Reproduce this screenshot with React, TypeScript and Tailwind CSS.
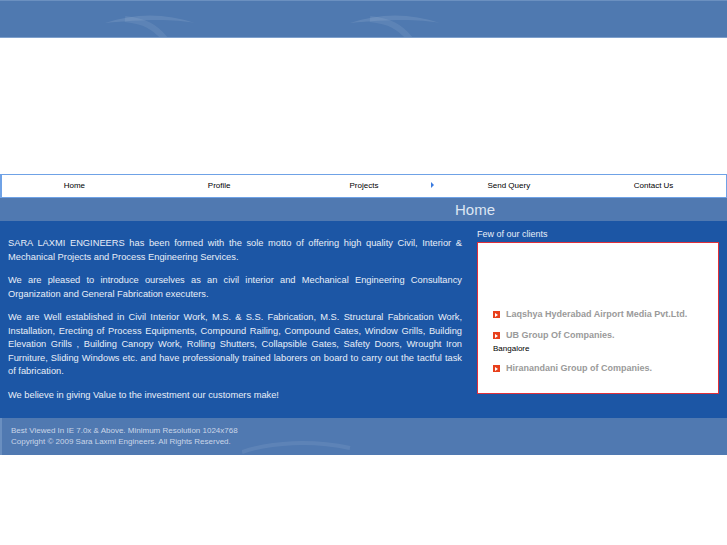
import { ReactNode } from "react";

const font = { fontFamily: '"Liberation Sans", Arial, sans-serif' };

const navItems = ["Home", "Profile", "Projects", "Send Query", "Contact Us"];

function Swoosh({ className }: { className?: string }) {
  return (
    <svg className={className} width="160" height="38" viewBox="0 0 160 38" fill="none">
      <path d="M10 22 C40 12, 70 12, 100 22 C80 18, 50 18, 10 22 Z" fill="#ffffff" fillOpacity="0.1" />
      <path d="M70 38 C60 26, 50 20, 30 18" stroke="#ffffff" strokeOpacity="0.08" strokeWidth="6" />
    </svg>
  );
}

function Client({ children }: { children: ReactNode }) {
  return (
    <div className="flex items-center gap-[6px] leading-[11px]">
      <span className="w-[7px] h-[7px] bg-[#e8401c] flex items-center justify-center">
        <span className="w-0 h-0 border-y-[2px] border-y-transparent border-l-[3px] border-l-white" />
      </span>
      <span className="text-[9px] font-bold text-[#9a9a9a]">{children}</span>
    </div>
  );
}

export default function App() {
  return (
    <div className="w-[727px] h-[545px] bg-white overflow-hidden" style={font}>
      <div className="relative h-[38px] bg-[#4f79b0] border-t border-[#6b90c0] border-b border-b-[#7ea0cc] overflow-hidden">
        <Swoosh className="absolute left-[95px] top-0" />
        <Swoosh className="absolute left-[340px] top-0" />
      </div>
      <div className="h-[136px]" />
      <div className="h-[24px] bg-white border border-[#6fa2e6] border-l-2 flex items-center text-[8px] text-black">
        {navItems.map((item, i) => (
          <div key={item} className="relative w-[145px] text-center">
            {item}
            {i === 2 && (
              <span className="absolute right-[2px] top-[2px] w-0 h-0 border-y-[3px] border-y-transparent border-l-[3px] border-l-[#3a7be0]" />
            )}
          </div>
        ))}
      </div>
      <div className="h-[23px] bg-[#5079b1] flex items-center">
        <div className="w-[455px]" />
        <div className="text-[15px] text-[#dde6f3] leading-none">Home</div>
      </div>
      <div className="h-[197px] bg-[#1c56a5] flex">
        <div className="w-[470px] pl-[8px] pr-[8px] pt-[16px] text-[9.3px] leading-[13.5px] text-[#e8eef8] text-justify">
          <p className="mb-[10px]">
            SARA LAXMI ENGINEERS has been formed with the sole motto of offering high quality Civil, Interior &amp; Mechanical Projects and Process Engineering Services.
          </p>
          <p className="mb-[10px]">
            We are pleased to introduce ourselves as an civil interior and Mechanical Engineering Consultancy Organization and General Fabrication executers.
          </p>
          <p className="mb-[10px]">
            We are Well established in Civil Interior Work, M.S. &amp; S.S. Fabrication, M.S. Structural Fabrication Work, Installation, Erecting of Process Equipments, Compound Railing, Compound Gates, Window Grills, Building Elevation Grills , Building Canopy Work, Rolling Shutters, Collapsible Gates, Safety Doors, Wrought Iron Furniture, Sliding Windows etc. and have professionally trained laborers on board to carry out the tactful task of fabrication.
          </p>
          <p>We believe in giving Value to the investment our customers make!</p>
        </div>
        <div className="pl-[7px] pt-[8px]">
          <div className="text-[9px] text-[#e8eef8] leading-[11px] mb-[2px]">Few of our clients</div>
          <div className="w-[242px] h-[152px] bg-white border border-[#e0303a] pl-[15px] pt-[66px]">
            <Client>Laqshya Hyderabad Airport Media Pvt.Ltd.</Client>
            <div className="h-[10px]" />
            <Client>UB Group Of Companies.</Client>
            <div className="text-[8px] leading-[11px] text-black mt-[2px]">Bangalore</div>
            <div className="h-[9px]" />
            <Client>Hiranandani Group of Companies.</Client>
          </div>
        </div>
      </div>
      <div className="relative h-[37px] bg-[#5079b1] border-l-2 border-[#6a8fc0] pl-[9px] pt-[7px] text-[8px] leading-[11px] text-[#c9d5e8] overflow-hidden">
        <svg className="absolute left-[240px] top-[14px]" width="110" height="24" viewBox="0 0 110 24" fill="none">
          <path d="M0 20 C30 10, 70 8, 108 16" stroke="#ffffff" strokeOpacity="0.08" strokeWidth="4" />
        </svg>
        <div className="relative">Best Viewed In IE 7.0x &amp; Above. Minimum Resolution 1024x768</div>
        <div className="relative">Copyright © 2009 Sara Laxmi Engineers. All Rights Reserved.</div>
      </div>
    </div>
  );
}
